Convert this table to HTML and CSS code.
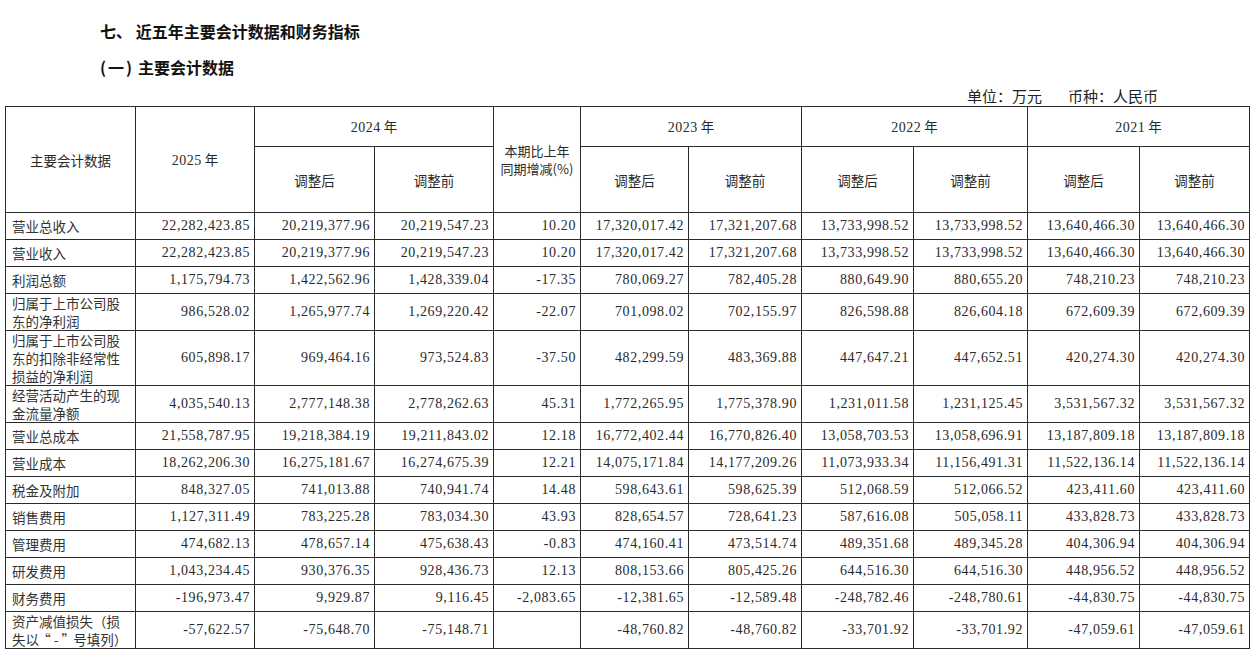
FILE: index.html
```html
<!DOCTYPE html>
<html lang="zh-CN">
<head>
<meta charset="utf-8">
<title>近五年主要会计数据和财务指标</title>
<link rel="stylesheet" href="styles.css">
</head>
<body>
<div class="page">
  <h1 class="title">七、 近五年主要会计数据和财务指标</h1>
  <h2 class="subtitle"><span class="paren">(一)</span>主要会计数据</h2>
  <div class="unit"><span>单位：万元</span><span>币种：人民币</span></div>
  <table class="data">
    <colgroup>
      <col style="width:130px"><col style="width:119px"><col style="width:120px"><col style="width:119px"><col style="width:87px"><col style="width:108px"><col style="width:113px"><col style="width:112px"><col style="width:114px"><col style="width:112px"><col style="width:110px">
    </colgroup>
    <thead>
      <tr class="h1">
        <th rowspan="2">主要会计数据</th>
        <th rowspan="2"><span class="num">2025</span> 年</th>
        <th colspan="2"><span class="num">2024</span> 年</th>
        <th rowspan="2" class="pct">本期比上年<br>同期增减(%)</th>
        <th colspan="2"><span class="num">2023</span> 年</th>
        <th colspan="2"><span class="num">2022</span> 年</th>
        <th colspan="2"><span class="num">2021</span> 年</th>
      </tr>
      <tr class="h2">
        <th>调整后</th><th>调整前</th>
        <th>调整后</th><th>调整前</th>
        <th>调整后</th><th>调整前</th>
        <th>调整后</th><th>调整前</th>
      </tr>
    </thead>
    <tbody>
      <tr class="r1"><td class="lbl">营业总收入</td><td>22,282,423.85</td><td>20,219,377.96</td><td>20,219,547.23</td><td>10.20</td><td>17,320,017.42</td><td>17,321,207.68</td><td>13,733,998.52</td><td>13,733,998.52</td><td>13,640,466.30</td><td>13,640,466.30</td></tr>
      <tr class="r1"><td class="lbl">营业收入</td><td>22,282,423.85</td><td>20,219,377.96</td><td>20,219,547.23</td><td>10.20</td><td>17,320,017.42</td><td>17,321,207.68</td><td>13,733,998.52</td><td>13,733,998.52</td><td>13,640,466.30</td><td>13,640,466.30</td></tr>
      <tr class="r1"><td class="lbl">利润总额</td><td>1,175,794.73</td><td>1,422,562.96</td><td>1,428,339.04</td><td>-17.35</td><td>780,069.27</td><td>782,405.28</td><td>880,649.90</td><td>880,655.20</td><td>748,210.23</td><td>748,210.23</td></tr>
      <tr class="r2"><td class="lbl">归属于上市公司股<br>东的净利润</td><td>986,528.02</td><td>1,265,977.74</td><td>1,269,220.42</td><td>-22.07</td><td>701,098.02</td><td>702,155.97</td><td>826,598.88</td><td>826,604.18</td><td>672,609.39</td><td>672,609.39</td></tr>
      <tr class="r3"><td class="lbl">归属于上市公司股<br>东的扣除非经常性<br>损益的净利润</td><td>605,898.17</td><td>969,464.16</td><td>973,524.83</td><td>-37.50</td><td>482,299.59</td><td>483,369.88</td><td>447,647.21</td><td>447,652.51</td><td>420,274.30</td><td>420,274.30</td></tr>
      <tr class="r2"><td class="lbl">经营活动产生的现<br>金流量净额</td><td>4,035,540.13</td><td>2,777,148.38</td><td>2,778,262.63</td><td>45.31</td><td>1,772,265.95</td><td>1,775,378.90</td><td>1,231,011.58</td><td>1,231,125.45</td><td>3,531,567.32</td><td>3,531,567.32</td></tr>
      <tr class="r1"><td class="lbl">营业总成本</td><td>21,558,787.95</td><td>19,218,384.19</td><td>19,211,843.02</td><td>12.18</td><td>16,772,402.44</td><td>16,770,826.40</td><td>13,058,703.53</td><td>13,058,696.91</td><td>13,187,809.18</td><td>13,187,809.18</td></tr>
      <tr class="r1"><td class="lbl">营业成本</td><td>18,262,206.30</td><td>16,275,181.67</td><td>16,274,675.39</td><td>12.21</td><td>14,075,171.84</td><td>14,177,209.26</td><td>11,073,933.34</td><td>11,156,491.31</td><td>11,522,136.14</td><td>11,522,136.14</td></tr>
      <tr class="r1"><td class="lbl">税金及附加</td><td>848,327.05</td><td>741,013.88</td><td>740,941.74</td><td>14.48</td><td>598,643.61</td><td>598,625.39</td><td>512,068.59</td><td>512,066.52</td><td>423,411.60</td><td>423,411.60</td></tr>
      <tr class="r1"><td class="lbl">销售费用</td><td>1,127,311.49</td><td>783,225.28</td><td>783,034.30</td><td>43.93</td><td>828,654.57</td><td>728,641.23</td><td>587,616.08</td><td>505,058.11</td><td>433,828.73</td><td>433,828.73</td></tr>
      <tr class="r1"><td class="lbl">管理费用</td><td>474,682.13</td><td>478,657.14</td><td>475,638.43</td><td>-0.83</td><td>474,160.41</td><td>473,514.74</td><td>489,351.68</td><td>489,345.28</td><td>404,306.94</td><td>404,306.94</td></tr>
      <tr class="r1"><td class="lbl">研发费用</td><td>1,043,234.45</td><td>930,376.35</td><td>928,436.73</td><td>12.13</td><td>808,153.66</td><td>805,425.26</td><td>644,516.30</td><td>644,516.30</td><td>448,956.52</td><td>448,956.52</td></tr>
      <tr class="r1"><td class="lbl">财务费用</td><td>-196,973.47</td><td>9,929.87</td><td>9,116.45</td><td>-2,083.65</td><td>-12,381.65</td><td>-12,589.48</td><td>-248,782.46</td><td>-248,780.61</td><td>-44,830.75</td><td>-44,830.75</td></tr>
      <tr class="r2"><td class="lbl">资产减值损失（损<br>失以<span class="q">“-”</span>号填列）</td><td>-57,622.57</td><td>-75,648.70</td><td>-75,148.71</td><td></td><td>-48,760.82</td><td>-48,760.82</td><td>-33,701.92</td><td>-33,701.92</td><td>-47,059.61</td><td>-47,059.61</td></tr>
    </tbody>
  </table>
</div>
</body>
</html>
```

FILE: styles.css
```css
html, body {
  margin: 0;
  padding: 0;
  background: #ffffff;
}

.page {
  width: 1260px;
  padding-top: 21px;
  font-family: "Noto Sans CJK SC", "Liberation Serif", sans-serif;
  color: #111;
}

.title {
  margin: 0 0 0 100px;
  font-size: 16px;
  line-height: 20px;
  font-weight: bold;
}

.subtitle {
  margin: 16px 0 0 100px;
  font-size: 16px;
  line-height: 20px;
  font-weight: bold;
}

.paren {
  letter-spacing: 2px;
  margin-right: 4px;
}

.unit {
  display: flex;
  justify-content: flex-end;
  gap: 26px;
  margin-top: 9px;
  padding-right: 102px;
  font-size: 15px;
  line-height: 20px;
  color: #222;
}

.data {
  margin-left: 5px;
  width: 1244px;
  table-layout: fixed;
  border-collapse: collapse;
  font-size: 13.5px;
  color: #2a2a2a;
}

.data th,
.data td {
  border: 1px solid #2b2b2b;
  padding: 0;
}

.data th {
  font-weight: normal;
  text-align: center;
  vertical-align: middle;
  line-height: 18px;
}

.data .h1 { height: 40px; }
.data .h2 { height: 66px; }

.data .pct {
  line-height: 18px;
  font-size: 13px;
}

.num {
  font-family: "Liberation Serif", serif;
  font-size: 14px;
  letter-spacing: 0.5px;
}

.data td {
  text-align: right;
  vertical-align: middle;
  padding-right: 4px;
  font-family: "Liberation Serif", serif;
  font-size: 14px;
  letter-spacing: 0.6px;
  line-height: 18px;
  white-space: nowrap;
}

.data td.lbl {
  text-align: left;
  padding-left: 6px;
  padding-right: 0;
  font-family: "Noto Sans CJK SC", sans-serif;
  font-size: 13.5px;
  letter-spacing: 0;
  color: #333;
}

.q {
  font-feature-settings: "halt";
  letter-spacing: 3px;
  margin: 0 2px 0 5px;
}

.data .r1 { height: 27px; }
.data .r2 { height: 37px; }
.data .r3 { height: 55px; }
```
